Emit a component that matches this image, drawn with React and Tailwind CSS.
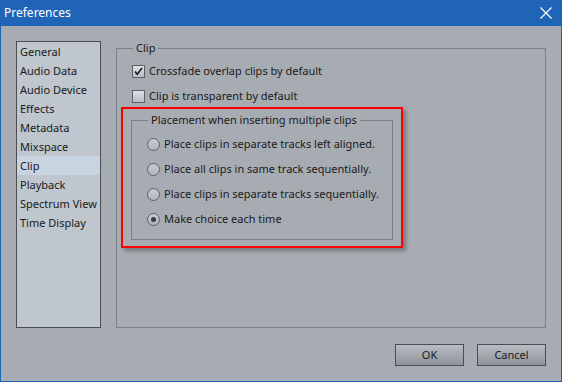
import { useState } from "react"

const pages = ["General", "Audio Data", "Audio Device", "Effects", "Metadata", "Mixspace", "Clip", "Playback", "Spectrum View", "Time Display"]

const placements = [
  "Place clips in separate tracks left aligned.",
  "Place all clips in same track sequentially.",
  "Place clips in separate tracks sequentially.",
  "Make choice each time",
]

function Checkbox({ checked, label, onChange }) {
  return (
    <label className="flex items-center h-[16px] cursor-default whitespace-nowrap" onClick={onChange}>
      <span className="w-[13px] h-[13px] shrink-0 border border-[#5c6068] bg-gradient-to-b from-[#dfe2e6] to-[#b9bdc3] flex items-center justify-center">
        {checked && (
          <svg width="11" height="11" viewBox="0 0 11 11">
            <path d="M2 5.5 L4.3 8.2 L9 2" fill="none" stroke="#1c1c1c" strokeWidth="1.6" />
          </svg>
        )}
      </span>
      <span className="ml-[4px]">{label}</span>
    </label>
  )
}

function Radio({ checked, label, onChange }) {
  return (
    <label className="flex items-center h-[16px] cursor-default whitespace-nowrap" onClick={onChange}>
      <span className="w-[13px] h-[13px] shrink-0 rounded-full border border-[#5c6068] bg-gradient-to-b from-[#c8ccd1] to-[#b0b5bb] flex items-center justify-center">
        {checked && <span className="w-[5px] h-[5px] rounded-full bg-[#3a3d42]" />}
      </span>
      <span className="ml-[4px]">{label}</span>
    </label>
  )
}

export default function App() {
  const [page, setPage] = useState("Clip")
  const [crossfade, setCrossfade] = useState(true)
  const [transparent, setTransparent] = useState(false)
  const [placement, setPlacement] = useState(3)

  return (
    <div
      className="w-[562px] h-[382px] flex flex-col bg-[#2064b8] text-[11px] leading-[16px] text-[#1a1a1a]"
      style={{ fontFamily: '"Noto Sans", "Open Sans", sans-serif' }}
    >
      {/* Title bar */}
      <div className="h-[26px] flex items-center justify-between pl-[4px] pr-[10px] text-white text-[12px]">
        <span>Preferences</span>
        <svg width="12" height="12" viewBox="0 0 12 12">
          <path d="M0.5 0.5 L11.5 11.5 M11.5 0.5 L0.5 11.5" stroke="#fff" strokeWidth="1.2" />
        </svg>
      </div>

      <div className="flex-1 mx-[1px] mb-[1px] bg-[#a7acb3] flex flex-col pl-[15px] pr-[15px] pt-[15px]">
        <div className="flex gap-[15px]">
          {/* Page list */}
          <div className="w-[85px] h-[287px] border border-[#4a4d55] bg-[#bfc6cd]">
            {pages.map((p) => (
              <div
                key={p}
                onClick={() => setPage(p)}
                className={`h-[19px] leading-[19px] pl-[3px] whitespace-nowrap ${page === p ? "bg-[#c8d4e0]" : ""}`}
              >
                {p}
              </div>
            ))}
          </div>

          {/* Clip group */}
          <fieldset className="-mt-[1px] w-[430px] h-[288px] border border-[#7b8088] flex flex-col">
            <legend className="ml-[16px] px-[3px]">Clip</legend>
            <div className="pl-[15px] pt-[7px] flex flex-col gap-[9px]">
              <Checkbox checked={crossfade} label="Crossfade overlap clips by default" onChange={() => setCrossfade(!crossfade)} />
              <Checkbox checked={transparent} label="Clip is transparent by default" onChange={() => setTransparent(!transparent)} />
            </div>

            <div className="ml-[4px] mt-[3px] w-[282px] h-[141px] border-2 border-[#ff0000] shadow-[3px_3px_4px_rgba(0,0,0,0.3)]">
              <fieldset className="ml-[8px] mt-[3px] w-[262px] h-[128px] border border-[#7b8088]">
                <legend className="ml-[16px] px-[3px]">Placement when inserting multiple clips</legend>
                <div className="pl-[15px] pt-[8px] flex flex-col gap-[9px]">
                  {placements.map((p, i) => (
                    <Radio key={p} checked={placement === i} label={p} onChange={() => setPlacement(i)} />
                  ))}
                </div>
              </fieldset>
            </div>
          </fieldset>
        </div>

        {/* Buttons */}
        <div className="mt-[16px] flex justify-end gap-[13px]">
          <button className="w-[69px] h-[22px] border border-[#4a4d55] bg-gradient-to-b from-[#b8bdc3] to-[#8f949b] text-[#1a1a1a]">OK</button>
          <button className="w-[69px] h-[22px] border border-[#4a4d55] bg-gradient-to-b from-[#b8bdc3] to-[#8f949b] text-[#1a1a1a]">Cancel</button>
        </div>
      </div>
    </div>
  )
}
